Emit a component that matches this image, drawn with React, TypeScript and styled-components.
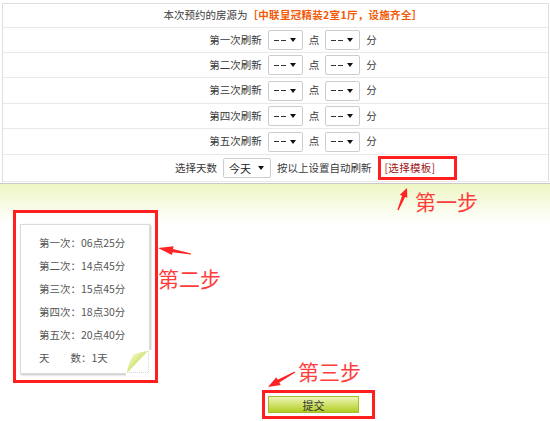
import styled, { createGlobalStyle } from 'styled-components';

const GlobalStyle = createGlobalStyle`
  html, body {
    margin: 0;
    padding: 0;
    background: #fff;
  }
  body {
    font-family: "Noto Sans CJK SC", "Noto Sans", sans-serif;
  }
`;

const Page = styled.div`
  position: relative;
  width: 550px;
  height: 421px;
  overflow: hidden;
  font-size: 10.5px;
  line-height: 1;
  color: #3a3a3a;
`;

const Table = styled.div`
  margin: 3px 1px 0 2px;
  border: 1px solid #dedede;
  border-bottom: 0;
`;

const Row = styled.div<{ $h: number; $lead?: number }>`
  display: flex;
  align-items: center;
  justify-content: ${(p) => (p.$lead ? 'flex-start' : 'center')};
  gap: 6px;
  height: ${(p) => p.$h}px;
  padding-left: ${(p) => p.$lead ?? 35}px;
  border-bottom: 1px solid #e9e9e9;
  white-space: nowrap;
`;

const Highlight = styled.span`
  color: #f25a06;
  font-weight: bold;
  margin-left: -6px;
  letter-spacing: 0.3px;
`;

const Select = styled.div<{ $w: number }>`
  display: flex;
  align-items: center;
  justify-content: space-between;
  box-sizing: border-box;
  width: ${(p) => p.$w}px;
  height: 20px;
  padding: 0 6px 0 5px;
  border: 1px solid #cdcdcd;
  border-radius: 2px;
  background: #fff;
  font-size: 11px;
  color: #222;
`;

const Dashes = styled.span`
  display: flex;
  gap: 2px;

  & > i {
    display: block;
    width: 5px;
    height: 1px;
    background: #333;
  }
`;

const Caret = styled.span`
  width: 0;
  height: 0;
  border-left: 3.5px solid transparent;
  border-right: 3.5px solid transparent;
  border-top: 4px solid #111;
`;

const StepBox = styled.div`
  display: flex;
  align-items: center;
  box-sizing: border-box;
  width: 79px;
  height: 24px;
  padding-left: 4px;
  border: 3px solid #ff1f1f;
`;

const TemplateLink = styled.span`
  color: #a01212;
  letter-spacing: 0.3px;
`;

const Lower = styled.div`
  margin-top: 1px;
  padding-top: 26px;
  border-top: 1px solid #c9c9c9;
  background: linear-gradient(to bottom, #edf5c4 0, #f8fbe6 22px, #fff 40px);
`;

const NoteFrame = styled.div`
  box-sizing: border-box;
  width: 145px;
  height: 173px;
  margin-left: 13px;
  padding: 11px 0 0 4px;
  border: 3px solid #ff1f1f;
  background: #fff;
`;

const Note = styled.div`
  position: relative;
  box-sizing: border-box;
  width: 130px;
  height: 150px;
  padding: 6px 0 0 18px;
  border: 1px solid #dadada;
  background: #fff;
  box-shadow: 1px 1px 2px rgba(0, 0, 0, 0.25);
  color: #555;
`;

const NoteLine = styled.div`
  height: 23px;
  line-height: 23px;
  white-space: pre;
`;

const Curl = styled.svg`
  position: absolute;
  right: -3px;
  bottom: -3px;
`;

const SubmitRow = styled.div`
  margin: 7px 0 0 262px;
`;

const SubmitFrame = styled.div`
  box-sizing: border-box;
  width: 113px;
  height: 29px;
  padding: 3px 0 0 3px;
  border: 3px solid #ff1f1f;
`;

const SubmitButton = styled.button`
  display: block;
  box-sizing: border-box;
  width: 91px;
  height: 17px;
  padding: 0;
  border: 1px solid #a3bd2c;
  background: linear-gradient(to bottom, #eef5b8 0%, #d3e474 45%, #b3cd24 100%);
  font: 11px "Noto Sans CJK SC", sans-serif;
  color: #333;
`;

const StepLabel = styled.span<{ $x: number; $y: number }>`
  position: absolute;
  left: ${(p) => p.$x}px;
  top: ${(p) => p.$y}px;
  font-size: 21px;
  line-height: 1;
  color: #ff3d3d;
  white-space: nowrap;
`;

const Overlay = styled.svg`
  position: absolute;
  top: 0;
  left: 0;
  pointer-events: none;
`;

// tapered annotation arrow from tail (tx,ty) to tip (hx,hy)
function arrowPoints(tx: number, ty: number, hx: number, hy: number, head: number, half: number) {
  const dx = hx - tx;
  const dy = hy - ty;
  const len = Math.hypot(dx, dy);
  const ux = dx / len;
  const uy = dy / len;
  const nx = -uy;
  const ny = ux;
  const bx = hx - ux * head;
  const by = hy - uy * head;
  const pts = [
    [tx + nx * 0.6, ty + ny * 0.6],
    [bx + nx * 1.6, by + ny * 1.6],
    [bx + nx * half, by + ny * half],
    [hx, hy],
    [bx - nx * half, by - ny * half],
    [bx - nx * 1.6, by - ny * 1.6],
    [tx - nx * 0.6, ty - ny * 0.6],
  ];
  return pts.map((p) => p.map((v) => v.toFixed(1)).join(',')).join(' ');
}

const refreshes = ['第一次刷新', '第二次刷新', '第三次刷新', '第四次刷新', '第五次刷新'];
const rowHeights = [24, 24, 25, 24, 25];

const schedule = [
  '第一次：06点25分',
  '第二次：14点45分',
  '第三次：15点45分',
  '第四次：18点30分',
  '第五次：20点40分',
  '天　　数：1天',
];

function Dropdown({ width, label }: { width: number; label?: string }) {
  return (
    <Select $w={width}>
      {label ? (
        <span>{label}</span>
      ) : (
        <Dashes>
          <i />
          <i />
        </Dashes>
      )}
      <Caret />
    </Select>
  );
}

export default function App() {
  return (
    <Page>
      <GlobalStyle />
      <Table>
        <Row $h={23}>
          <span>本次预约的房源为</span>
          <Highlight>［中联皇冠精装2室1厅，设施齐全］</Highlight>
        </Row>
        {refreshes.map((label, i) => (
          <Row key={label} $h={rowHeights[i]}>
            <span>{label}</span>
            <Dropdown width={35} />
            <span>点</span>
            <Dropdown width={35} />
            <span>分</span>
          </Row>
        ))}
        <Row $h={26} $lead={172}>
          <span>选择天数</span>
          <Dropdown width={48} label="今天" />
          <span>按以上设置自动刷新</span>
          <StepBox>
            <TemplateLink>[选择模板]</TemplateLink>
          </StepBox>
        </Row>
      </Table>

      <Lower>
        <NoteFrame>
          <Note>
            {schedule.map((line) => (
              <NoteLine key={line}>{line}</NoteLine>
            ))}
            <Curl width="26" height="26" viewBox="0 0 26 26">
              <defs>
                <linearGradient id="curl" x1="0.2" y1="0.2" x2="0.7" y2="0.7">
                  <stop offset="0" stopColor="#f2f7c6" />
                  <stop offset="1" stopColor="#c4d84a" />
                </linearGradient>
              </defs>
              <polygon points="22,0 26,0 26,26 0,26 0,23" fill="#fff" />
              <path d="M22.5 1V22.5H1" fill="none" stroke="#d6d6d6" strokeDasharray="1 1" />
              <path d="M22 1C15 2 10 3 7 5C4 10 2 16 1 23Z" fill="url(#curl)" />
            </Curl>
          </Note>
        </NoteFrame>
        <SubmitRow>
          <SubmitFrame>
            <SubmitButton type="button">提交</SubmitButton>
          </SubmitFrame>
        </SubmitRow>
      </Lower>

      <Overlay width="550" height="421" viewBox="0 0 550 421">
        <polygon points={arrowPoints(398, 210, 407, 188, 9, 4)} fill="#ff2323" />
        <polygon points={arrowPoints(191, 254, 158, 248, 15, 4.5)} fill="#ff2323" />
        <polygon points={arrowPoints(295, 372, 268, 387, 12, 4.5)} fill="#ff2323" />
      </Overlay>
      <StepLabel $x={415} $y={191}>第一步</StepLabel>
      <StepLabel $x={158} $y={268}>第二步</StepLabel>
      <StepLabel $x={298} $y={361}>第三步</StepLabel>
    </Page>
  );
}
